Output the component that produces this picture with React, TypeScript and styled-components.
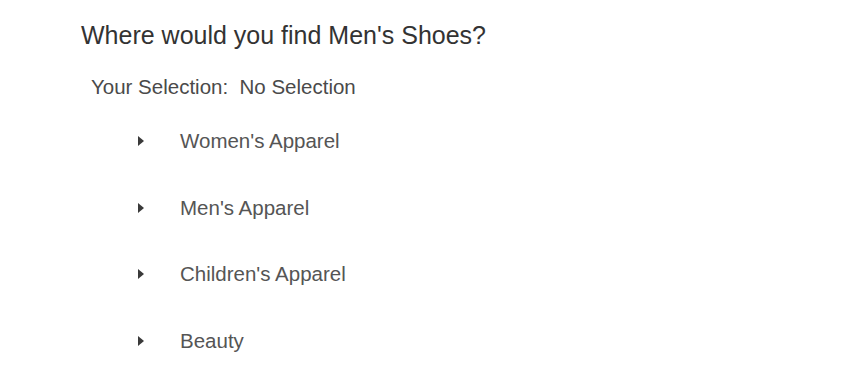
import React from 'react';
import styled, { createGlobalStyle } from 'styled-components';

const GlobalStyle = createGlobalStyle`
    body{
        margin: 0;
        background: #fff;
        font-family: "Liberation Sans", Arial, sans-serif;
    }
`

const Wrapper = styled.div`
    width: 850px;
    height: 375px;
    padding: 20px 0 0 81px;
    box-sizing: border-box;
`

const Question = styled.h1`
    margin: 0;
    font-size: 25px;
    font-weight: 400;
    line-height: 30px;
    color: #333;
`

const Selection = styled.div`
    margin: 25px 0 0 10px;
    font-size: 20.5px;
    line-height: 24px;
    color: #4a4a4a;
    white-space: pre;
`

const List = styled.ul`
    list-style: none;
    margin: 30px 0 0 0;
    padding: 0 0 0 57px;
    display: flex;
    flex-direction: column;
    gap: 42.5px;
`

const Item = styled.li`
    display: flex;
    align-items: center;
    height: 24px;
    font-size: 20.5px;
    color: #555;
`

const Caret = styled.span`
    width: 0;
    height: 0;
    border-top: 5px solid transparent;
    border-bottom: 5px solid transparent;
    border-left: 6px solid #3a3a3a;
    margin-right: 36px;
`

const categories = ["Women's Apparel", "Men's Apparel", "Children's Apparel", "Beauty"];

export default function App(){
    return(
        <Wrapper>
            <GlobalStyle />
            <Question>Where would you find Men's Shoes?</Question>
            <Selection>Your Selection:  No Selection</Selection>
            <List>
                {categories.map((c) => (
                    <Item key={c}>
                        <Caret />
                        <span>{c}</span>
                    </Item>
                ))}
            </List>
        </Wrapper>
    )
}
